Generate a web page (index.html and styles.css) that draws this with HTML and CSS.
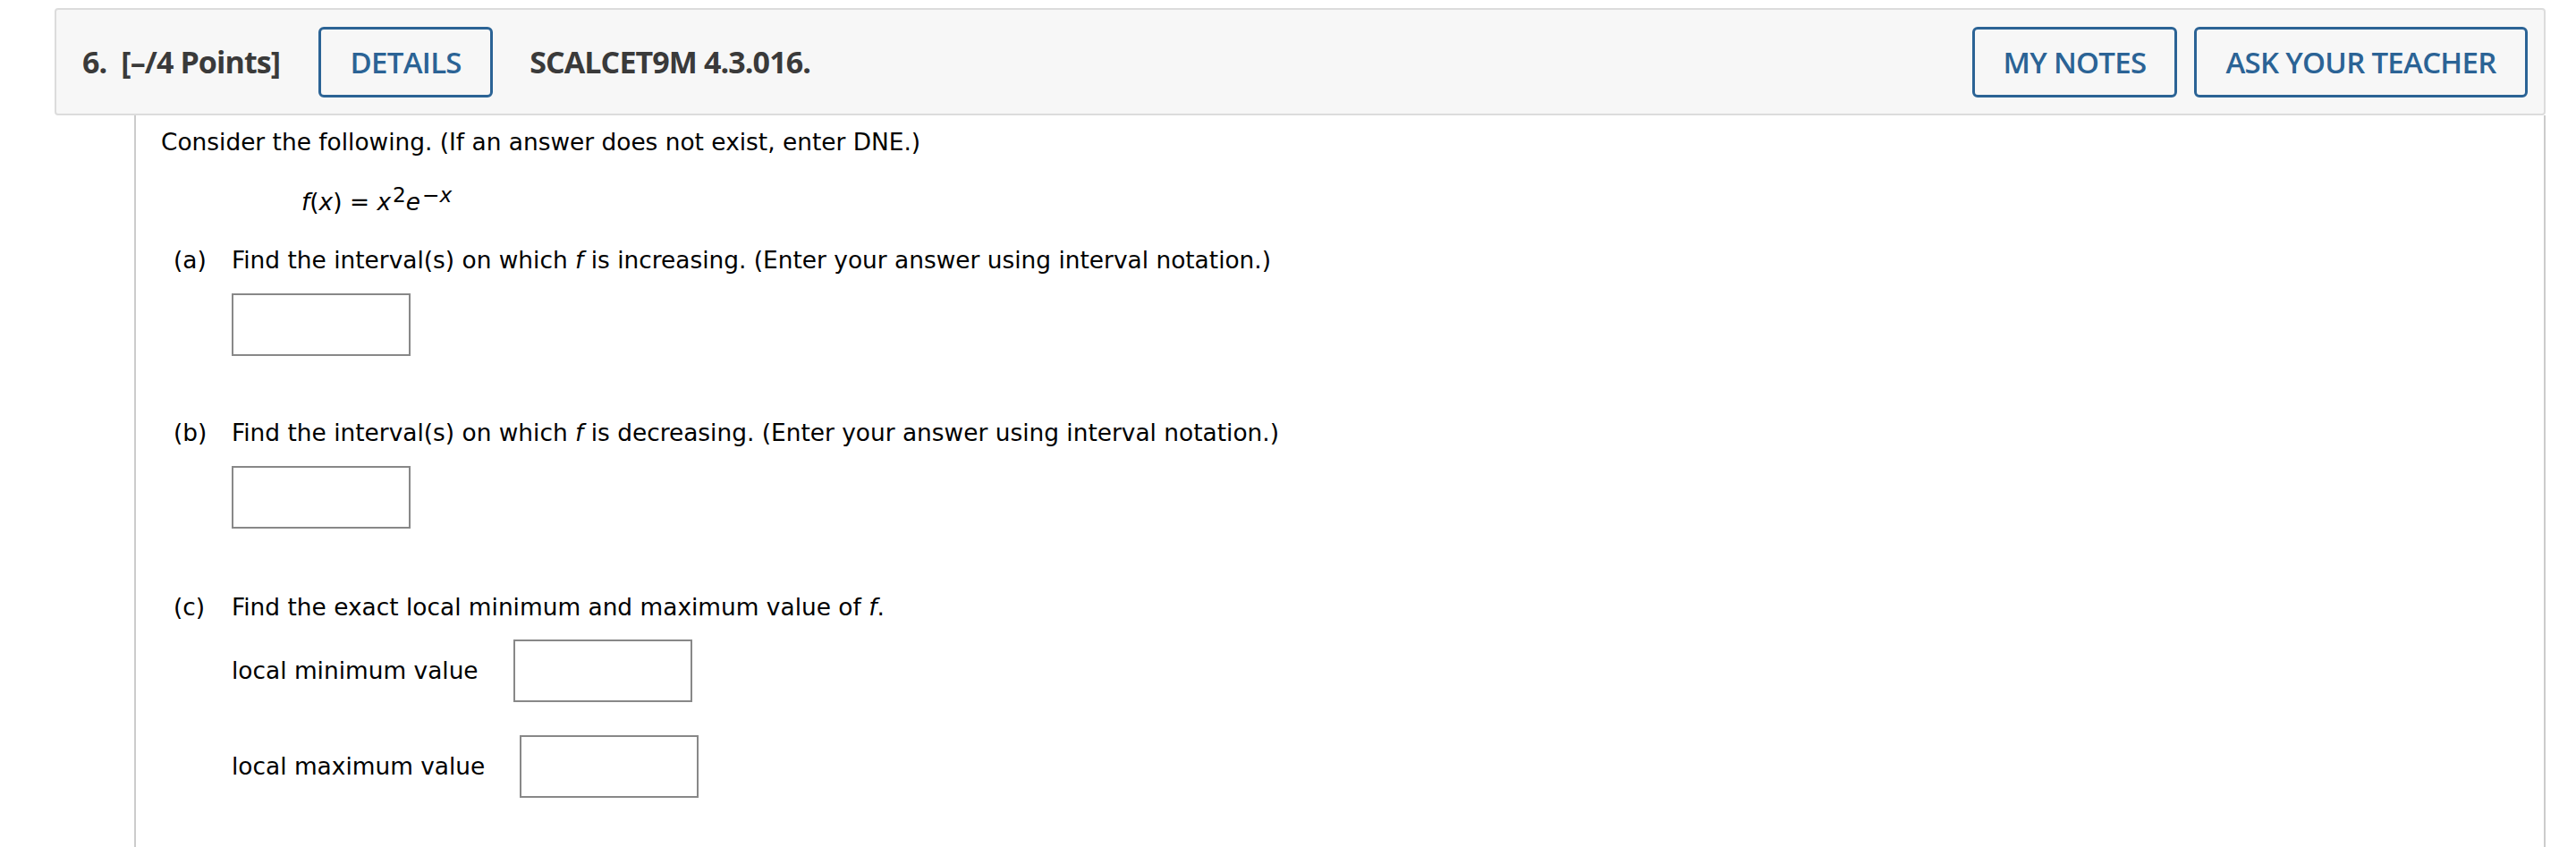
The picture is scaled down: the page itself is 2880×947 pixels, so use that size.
FILE: index.html
```html
<!DOCTYPE html>
<html lang="en">
<head>
<meta charset="utf-8">
<title>Question 6</title>
<link rel="stylesheet" href="styles.css">
</head>
<body>
<div class="page">
  <div class="qhead">
    <span class="qnum">6.</span>
    <span class="qpoints">[–/4 Points]</span>
    <button class="btn btn-details">DETAILS</button>
    <span class="qcode">SCALCET9M 4.3.016.</span>
    <span class="spacer"></span>
    <button class="btn btn-notes">MY NOTES</button>
    <button class="btn btn-ask">ASK YOUR TEACHER</button>
  </div>
  <div class="qbody">
    <p class="intro">Consider the following. (If an answer does not exist, enter DNE.)</p>
    <p class="formula"><i>f</i>(<i>x</i>) = <i>x</i><sup class="sup">2</sup><i>e</i><sup class="sup">−<i>x</i></sup></p>

    <div class="part part-a">
      <div class="part-row"><span class="plabel">(a)</span><span>Find the interval(s) on which <i>f</i> is increasing. (Enter your answer using interval notation.)</span></div>
      <div class="answer"><input class="box" type="text" aria-label="answer a"></div>
    </div>

    <div class="part part-b">
      <div class="part-row"><span class="plabel">(b)</span><span>Find the interval(s) on which <i>f</i> is decreasing. (Enter your answer using interval notation.)</span></div>
      <div class="answer"><input class="box" type="text" aria-label="answer b"></div>
    </div>

    <div class="part part-c">
      <div class="part-row"><span class="plabel">(c)</span><span>Find the exact local minimum and maximum value of <i>f</i>.</span></div>
      <div class="answer value-row row-min"><span class="vlabel">local minimum value</span><input class="box" type="text" aria-label="local minimum value"></div>
      <div class="answer value-row row-max"><span class="vlabel">local maximum value</span><input class="box" type="text" aria-label="local maximum value"></div>
    </div>
  </div>
</div>
</body>
</html>
```
FILE: styles.css
```css
html, body {
  margin: 0;
  padding: 0;
  background: #ffffff;
  overflow: hidden;
}
.page {
  padding: 9px 34px 0 61px;
}
.qhead {
  display: flex;
  align-items: center;
  box-sizing: border-box;
  height: 120px;
  border: 2px solid #dcdcdc;
  border-radius: 4px;
  background: #f7f7f7;
  padding: 0 18px 0 29px;
  font-family: "Open Sans", "Liberation Sans", sans-serif;
  font-weight: 700;
  font-size: 34px;
  letter-spacing: -0.9px;
  color: #3a3a3a;
}
.qnum {
  margin-right: 16px;
}
.qpoints {
  margin-right: 43px;
}
.qcode {
  margin-left: 41px;
}
.spacer {
  flex: 1;
}
.btn {
  box-sizing: border-box;
  height: 79px;
  border: 3px solid #2b6395;
  border-radius: 6px;
  background: transparent;
  color: #2b6395;
  font-family: "Open Sans", "Liberation Sans", sans-serif;
  font-weight: 600;
  font-size: 33px;
  letter-spacing: -0.7px;
  padding: 0;
  margin: 0;
  text-align: center;
}
.btn-details {
  width: 195px;
}
.btn-notes {
  width: 229px;
}
.btn-ask {
  width: 373px;
  margin-left: 19px;
}
.qbody {
  box-sizing: border-box;
  margin-left: 89px;
  min-height: 818px;
  border-left: 2px solid #cccccc;
  border-right: 2px solid #cccccc;
  padding: 12px 0 0 28px;
  font-family: "DejaVu Sans", Verdana, sans-serif;
  font-size: 26.4px;
  line-height: 36px;
  color: #000000;
}
.qbody p {
  margin: 0;
}
.formula {
  margin-top: 31px !important;
  padding-left: 157px;
}
.sup {
  font-size: 88%;
  line-height: 0;
  vertical-align: 9px;
  margin-left: 2px;
}
.part {
  padding-left: 14px;
}
.part-a {
  margin-top: 29px;
}
.part-b {
  margin-top: 68px;
}
.part-c {
  margin-top: 70px;
}
.part-row {
  display: flex;
}
.plabel {
  width: 65px;
  flex: none;
}
.answer {
  padding-left: 65px;
  margin-top: 19px;
}
.box {
  display: block;
  box-sizing: border-box;
  width: 200px;
  height: 70px;
  border: 2px solid #888888;
  border-radius: 0;
  background: #ffffff;
  margin: 0;
  padding: 0;
}
.value-row {
  display: flex;
  align-items: center;
}
.row-min {
  margin-top: 18px;
}
.row-max {
  margin-top: 37px;
}
.vlabel {
  margin-right: 39px;
}
```
